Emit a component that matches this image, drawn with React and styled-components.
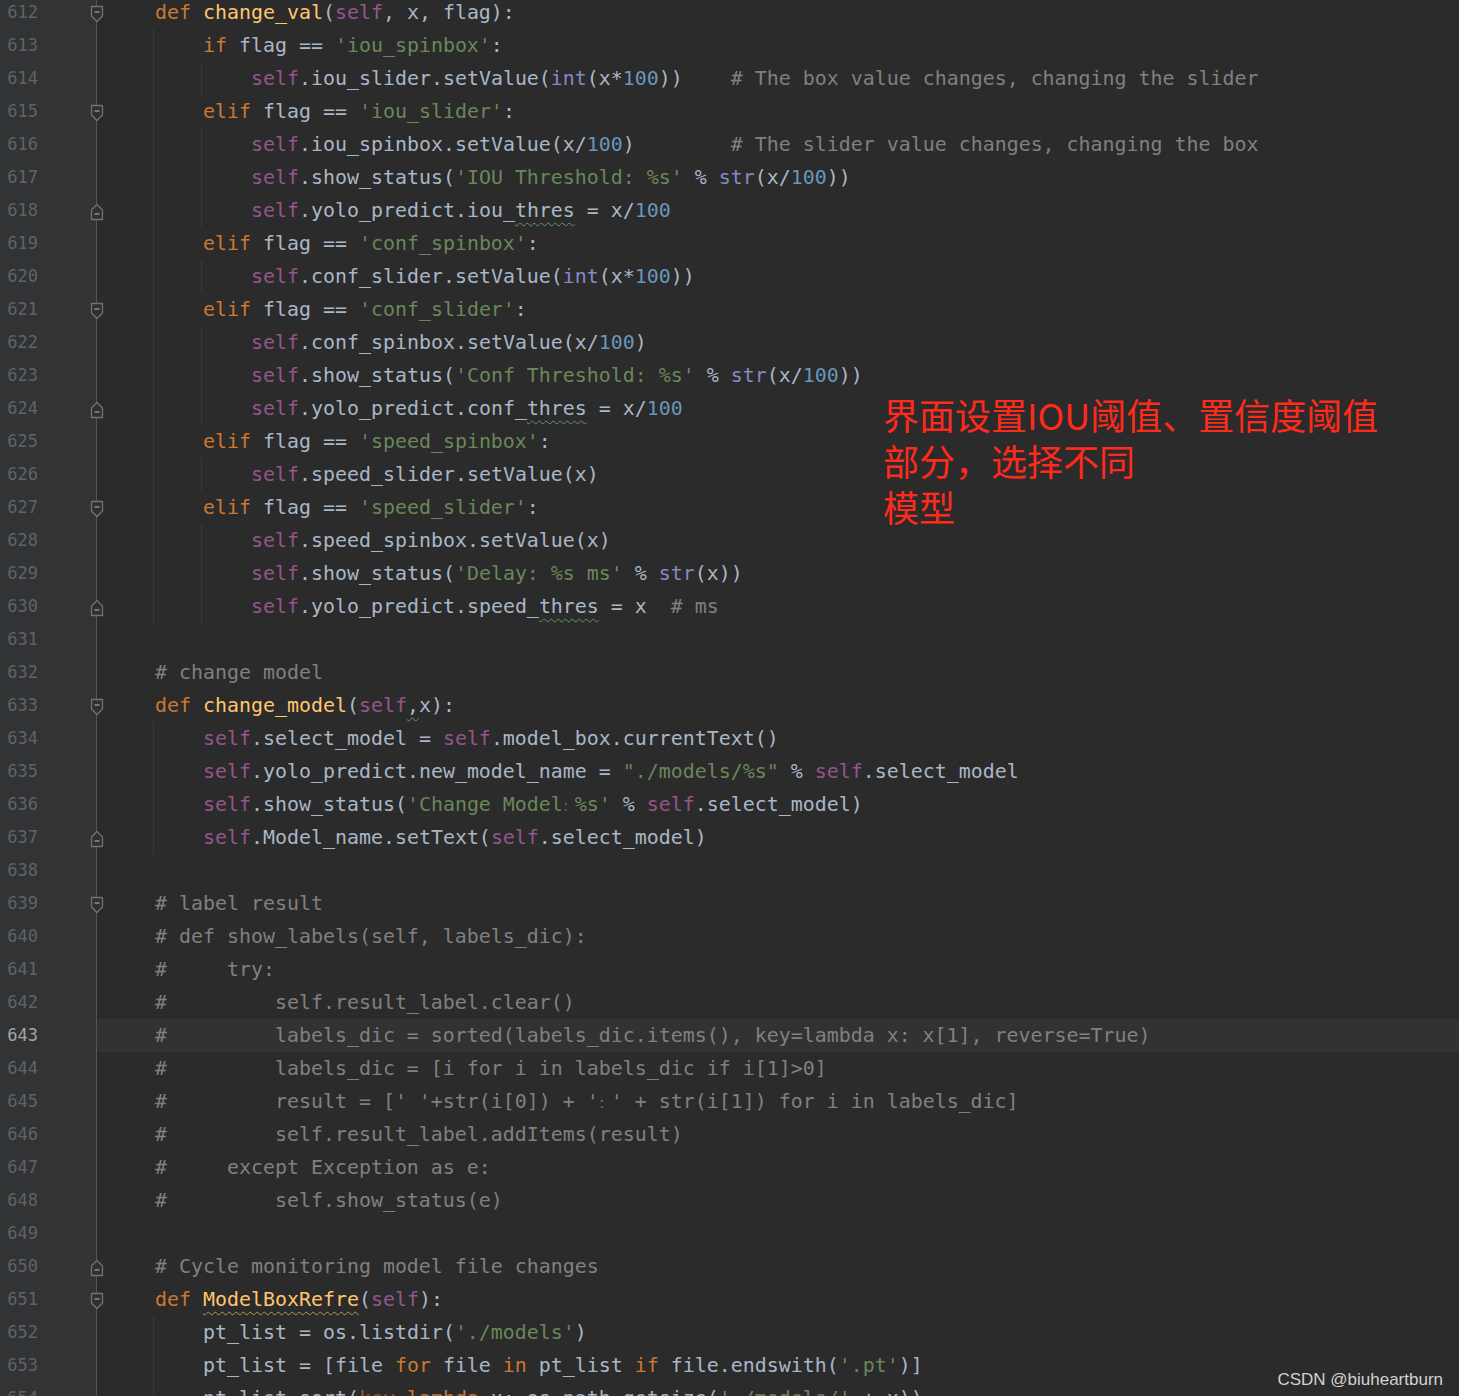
import React from "react";
import styled, { createGlobalStyle } from "styled-components";

const GlobalStyle = createGlobalStyle`
  html, body {
    margin: 0;
    padding: 0;
    background: #2b2b2b;
  }
`;

const colors = {
  t: "#a9b7c6",
  k: "#cc7832",
  f: "#ffc66d",
  s: "#94558d",
  str: "#6a8759",
  n: "#6897bb",
  c: "#808080",
  b: "#8888c6",
  p: "#aa4926",
};

const wavyColors = {
  t: "#5f9a63",
  f: "#b59a4f",
  k: "#b08a4a",
};

// [kind, text, mod]
const lines = [
  { n: 612, ind: 0, fold: "open", t: [["k", "def "], ["f", "change_val"], ["t", "("], ["s", "self"], ["t", ", x, flag):"]] },
  { n: 613, ind: 1, t: [["k", "if "], ["t", "flag == "], ["str", "'iou_spinbox'"], ["t", ":"]] },
  { n: 614, ind: 2, t: [["s", "self"], ["t", ".iou_slider.setValue("], ["b", "int"], ["t", "(x*"], ["n", "100"], ["t", "))    "], ["c", "# The box value changes, changing the slider"]] },
  { n: 615, ind: 1, fold: "open", t: [["k", "elif "], ["t", "flag == "], ["str", "'iou_slider'"], ["t", ":"]] },
  { n: 616, ind: 2, t: [["s", "self"], ["t", ".iou_spinbox.setValue(x/"], ["n", "100"], ["t", ")        "], ["c", "# The slider value changes, changing the box"]] },
  { n: 617, ind: 2, t: [["s", "self"], ["t", ".show_status("], ["str", "'IOU Threshold: %s'"], ["t", " % "], ["b", "str"], ["t", "(x/"], ["n", "100"], ["t", "))"]] },
  { n: 618, ind: 2, fold: "end", t: [["s", "self"], ["t", ".yolo_predict.iou_"], ["t", "thres", "wavy"], ["t", " = x/"], ["n", "100"]] },
  { n: 619, ind: 1, t: [["k", "elif "], ["t", "flag == "], ["str", "'conf_spinbox'"], ["t", ":"]] },
  { n: 620, ind: 2, t: [["s", "self"], ["t", ".conf_slider.setValue("], ["b", "int"], ["t", "(x*"], ["n", "100"], ["t", "))"]] },
  { n: 621, ind: 1, fold: "open", t: [["k", "elif "], ["t", "flag == "], ["str", "'conf_slider'"], ["t", ":"]] },
  { n: 622, ind: 2, t: [["s", "self"], ["t", ".conf_spinbox.setValue(x/"], ["n", "100"], ["t", ")"]] },
  { n: 623, ind: 2, t: [["s", "self"], ["t", ".show_status("], ["str", "'Conf Threshold: %s'"], ["t", " % "], ["b", "str"], ["t", "(x/"], ["n", "100"], ["t", "))"]] },
  { n: 624, ind: 2, fold: "end", t: [["s", "self"], ["t", ".yolo_predict.conf_"], ["t", "thres", "wavy"], ["t", " = x/"], ["n", "100"]] },
  { n: 625, ind: 1, t: [["k", "elif "], ["t", "flag == "], ["str", "'speed_spinbox'"], ["t", ":"]] },
  { n: 626, ind: 2, t: [["s", "self"], ["t", ".speed_slider.setValue(x)"]] },
  { n: 627, ind: 1, fold: "open", t: [["k", "elif "], ["t", "flag == "], ["str", "'speed_slider'"], ["t", ":"]] },
  { n: 628, ind: 2, t: [["s", "self"], ["t", ".speed_spinbox.setValue(x)"]] },
  { n: 629, ind: 2, t: [["s", "self"], ["t", ".show_status("], ["str", "'Delay: %s ms'"], ["t", " % "], ["b", "str"], ["t", "(x))"]] },
  { n: 630, ind: 2, fold: "end", t: [["s", "self"], ["t", ".yolo_predict.speed_"], ["t", "thres", "wavy"], ["t", " = x  "], ["c", "# ms"]] },
  { n: 631, ind: 0, t: [] },
  { n: 632, ind: 0, t: [["c", "# change model"]] },
  { n: 633, ind: 0, fold: "open", t: [["k", "def "], ["f", "change_model"], ["t", "("], ["s", "self"], ["t", ",", "wavy"], ["t", "x):"]] },
  { n: 634, ind: 1, t: [["s", "self"], ["t", ".select_model = "], ["s", "self"], ["t", ".model_box.currentText()"]] },
  { n: 635, ind: 1, t: [["s", "self"], ["t", ".yolo_predict.new_model_name = "], ["str", '"./models/%s"'], ["t", " % "], ["s", "self"], ["t", ".select_model"]] },
  { n: 636, ind: 1, t: [["s", "self"], ["t", ".show_status("], ["str", "'Change Model"], ["str", "：", "narrow"], ["str", "%s'"], ["t", " % "], ["s", "self"], ["t", ".select_model)"]] },
  { n: 637, ind: 1, fold: "end", t: [["s", "self"], ["t", ".Model_name.setText("], ["s", "self"], ["t", ".select_model)"]] },
  { n: 638, ind: 0, t: [] },
  { n: 639, ind: 0, fold: "open", t: [["c", "# label result"]] },
  { n: 640, ind: 0, t: [["c", "# def show_labels(self, labels_dic):"]] },
  { n: 641, ind: 0, t: [["c", "#     try:"]] },
  { n: 642, ind: 0, t: [["c", "#         self.result_label.clear()"]] },
  { n: 643, ind: 0, current: true, t: [["c", "#         labels_dic = sorted(labels_dic.items(), key=lambda x: x[1], reverse=True)"]] },
  { n: 644, ind: 0, t: [["c", "#         labels_dic = [i for i in labels_dic if i[1]>0]"]] },
  { n: 645, ind: 0, t: [["c", "#         result = [' '+str(i[0]) + '"], ["c", "：", "narrow"], ["c", "' + str(i[1]) for i in labels_dic]"]] },
  { n: 646, ind: 0, t: [["c", "#         self.result_label.addItems(result)"]] },
  { n: 647, ind: 0, t: [["c", "#     except Exception as e:"]] },
  { n: 648, ind: 0, t: [["c", "#         self.show_status(e)"]] },
  { n: 649, ind: 0, t: [] },
  { n: 650, ind: 0, fold: "end", t: [["c", "# Cycle monitoring model file changes"]] },
  { n: 651, ind: 0, fold: "open", t: [["k", "def "], ["f", "ModelBoxRefre", "wavy"], ["t", "("], ["s", "self"], ["t", "):"]] },
  { n: 652, ind: 1, t: [["t", "pt_list = os.listdir("], ["str", "'./models'"], ["t", ")"]] },
  { n: 653, ind: 1, t: [["t", "pt_list = [file "], ["k", "for"], ["t", " file "], ["k", "in"], ["t", " pt_list "], ["k", "if"], ["t", " file.endswith("], ["str", "'.pt'"], ["t", ")]"]] },
  { n: 654, ind: 1, t: [["t", "pt_list.sort("], ["p", "key"], ["t", "="], ["k", "lambda"], ["t", " x: os.path.getsize("], ["str", "'./models/'"], ["t", " + x))"]] },
];

function FoldIcon({ kind }) {
  const shape =
    kind === "open"
      ? "M1.5 1.5 H12.5 V11 L7 16.5 L1.5 11 Z"
      : "M1.5 16.5 H12.5 V7 L7 1.5 L1.5 7 Z";
  const dashY = kind === "open" ? 7 : 11;
  return (
    <svg width="14" height="18" viewBox="0 0 14 18">
      <path d={shape} fill="#2f3031" stroke="#727272" strokeWidth="1.3" strokeLinejoin="round" />
      <line x1="4.5" y1={dashY} x2="9.5" y2={dashY} stroke="#8e8e8e" strokeWidth="1.5" />
    </svg>
  );
}

function CodeLine({ line }) {
  const units = line.t.length ? Array.from({ length: line.ind }) : [];
  return (
    <Row $current={line.current}>
      <LineNo $current={line.current}>{line.n}</LineNo>
      <FoldCell>{line.fold ? <FoldIcon kind={line.fold} /> : null}</FoldCell>
      <Code>
        {units.map((_, i) => (
          <Indent key={i} />
        ))}
        <Text>
          {line.t.map(([kind, text, mod], i) =>
            mod === "narrow" ? (
              <Narrow key={i} $kind={kind}>{text}</Narrow>
            ) : (
              <Tok key={i} $kind={kind} $wavy={mod === "wavy"}>
                {text}
              </Tok>
            )
          )}
        </Text>
      </Code>
    </Row>
  );
}

export default function App() {
  return (
    <>
      <GlobalStyle />
      <Screen>
        <Editor>
          {lines.map((line) => (
            <CodeLine key={line.n} line={line} />
          ))}
        </Editor>
        <Note>
          界面设置IOU阈值、置信度阈值
          <br />
          部分，选择不同
          <br />
          模型
        </Note>
        <Watermark>CSDN @biuheartburn</Watermark>
      </Screen>
    </>
  );
}

const Screen = styled.div`
  position: relative;
  width: 1459px;
  height: 1396px;
  overflow: hidden;
  background: #2b2b2b;
`;

const Editor = styled.div`
  margin-top: -4px;
  display: flex;
  flex-direction: column;
`;

const Row = styled.div`
  display: grid;
  grid-template-columns: 90px 14px 1fr;
  height: 33px;
  background: ${(p) => (p.$current ? "#323232" : "#2b2b2b")};
`;

const LineNo = styled.div`
  background: #313335;
  padding-right: 52px;
  text-align: right;
  font-family: "DejaVu Sans Mono", "Liberation Mono", monospace;
  font-size: 17px;
  line-height: 33px;
  color: ${(p) => (p.$current ? "#a4a3a3" : "#606366")};
`;

const FoldCell = styled.div`
  display: flex;
  align-items: center;
  justify-content: center;
  padding-top: 2px;
  background: linear-gradient(
    to right,
    #313335 0 6px,
    #555555 6px 7px,
    transparent 7px
  );
`;

const Code = styled.div`
  display: flex;
  align-items: stretch;
  padding-left: 49px;
  white-space: pre;
  font-family: "DejaVu Sans Mono", "Liberation Mono", monospace;
  font-size: 19.93px;
  line-height: 33px;
  color: #a9b7c6;
`;

const Indent = styled.span`
  display: inline-block;
  width: 48px;
  border-left: 1px solid #3a3a3a;
  box-sizing: border-box;
`;

const Text = styled.span`
  padding-left: 2px;
`;

const Tok = styled.span`
  color: ${(p) => colors[p.$kind]};
  ${(p) =>
    p.$wavy &&
    `
    text-decoration: underline wavy ${wavyColors[p.$kind] || "#5f9a63"};
    text-decoration-thickness: 1px;
    text-underline-offset: 5px;
  `}
`;

const Narrow = styled.span`
  font-family: "Noto Sans CJK SC", sans-serif;
  font-size: 12px;
  color: ${(p) => colors[p.$kind]};
`;

const Note = styled.div`
  position: absolute;
  left: 883px;
  top: 391px;
  font-family: "Noto Sans CJK SC", "Liberation Sans", sans-serif;
  font-size: 36px;
  line-height: 46px;
  color: #ff2a1c;
`;

const Watermark = styled.div`
  position: absolute;
  right: 16px;
  bottom: 6px;
  font-family: "Liberation Sans", Arial, sans-serif;
  font-size: 17px;
  color: #d2d2d2;
`;
